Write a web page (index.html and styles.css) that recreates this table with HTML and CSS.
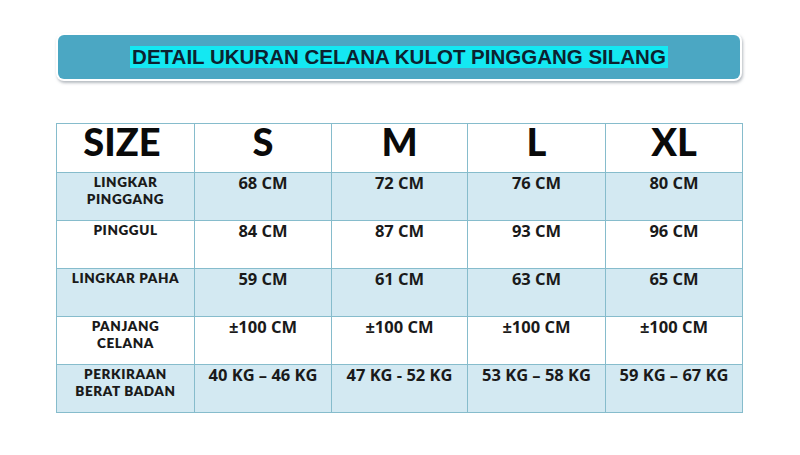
FILE: index.html
```html
<!DOCTYPE html>
<html lang="id">
<head>
<meta charset="utf-8">
<title>Detail Ukuran Celana Kulot Pinggang Silang</title>
<link rel="stylesheet" href="styles.css">
</head>
<body>
<div class="page">
  <div class="banner">
    <h1 class="title"><span class="hl">DETAIL UKURAN CELANA KULOT PINGGANG SILANG</span></h1>
  </div>
  <table class="sizes">
    <colgroup>
      <col class="c0"><col class="c1"><col class="c2"><col class="c3"><col class="c4">
    </colgroup>
    <thead>
      <tr class="head">
        <th class="size">SIZE</th><th>S</th><th>M</th><th>L</th><th>XL</th>
      </tr>
    </thead>
    <tbody>
      <tr class="blue">
        <th class="lbl">LINGKAR<br>PINGGANG</th><td>68 CM</td><td>72 CM</td><td>76 CM</td><td>80 CM</td>
      </tr>
      <tr class="white">
        <th class="lbl">PINGGUL</th><td>84 CM</td><td>87 CM</td><td>93 CM</td><td>96 CM</td>
      </tr>
      <tr class="blue">
        <th class="lbl">LINGKAR PAHA</th><td>59 CM</td><td>61 CM</td><td>63 CM</td><td>65 CM</td>
      </tr>
      <tr class="white">
        <th class="lbl">PANJANG<br>CELANA</th><td>±100 CM</td><td>±100 CM</td><td>±100 CM</td><td>±100 CM</td>
      </tr>
      <tr class="blue">
        <th class="lbl">PERKIRAAN<br>BERAT BADAN</th><td>40 KG – 46 KG</td><td>47 KG - 52 KG</td><td>53 KG – 58 KG</td><td>59 KG – 67 KG</td>
      </tr>
    </tbody>
  </table>
</div>
</body>
</html>
```
FILE: styles.css
```css
html, body {
  margin: 0;
  padding: 0;
  background: #ffffff;
}
.page {
  width: 800px;
  height: 455px;
  padding-top: 35px;
  box-sizing: border-box;
  font-family: "Open Sans", Lato, sans-serif;
  color: #111111;
}
.banner {
  margin-left: 58px;
  width: 682px;
  height: 44px;
  box-sizing: border-box;
  background: #4ba7c3;
  border-radius: 6px;
  box-shadow: 0 0 0 2px #ffffff, 1px 2px 3px 2px rgba(120, 130, 140, 0.55);
  display: flex;
  align-items: center;
  justify-content: center;
}
.title {
  margin: 0;
  font-family: "Liberation Sans", Arial, sans-serif;
  font-weight: 700;
  font-size: 20.5px;
  line-height: 22px;
  color: #0c2230;
  letter-spacing: 0;
}
.hl {
  display: inline-block;
  background: #14e8f2;
  padding: 0 2px;
}
.sizes {
  margin-top: 44px;
  margin-left: 56px;
  width: 686px;
  border-collapse: collapse;
  table-layout: fixed;
}
.c0 { width: 138px; }
.c1 { width: 137px; }
.c2 { width: 136px; }
.c3 { width: 138px; }
.c4 { width: 137px; }
.sizes th, .sizes td {
  border: 1px solid #86bccc;
  text-align: center;
  vertical-align: top;
  padding: 0;
  font-weight: 700;
}
.head th {
  height: 48px;
  font-family: Lato, "Open Sans", sans-serif;
  font-size: 38px;
  line-height: 34px;
  font-weight: 900;
  padding-top: 0;
  color: #0a0a0a;
}
.head th.size {
  padding-right: 7px;
}
.sizes tbody tr {
  height: 48px;
}
.sizes td {
  font-size: 16.5px;
  line-height: 20px;
  color: #1a1a1a;
}
.sizes th.lbl {
  font-family: Lato, "Open Sans", sans-serif;
  font-weight: 800;
  font-size: 13.5px;
  line-height: 16.5px;
  letter-spacing: 0.6px;
  padding-top: 1px;
  color: #1a1a1a;
}
.blue th, .blue td {
  background: #d3e9f2;
}
.white th, .white td {
  background: #ffffff;
}
```
